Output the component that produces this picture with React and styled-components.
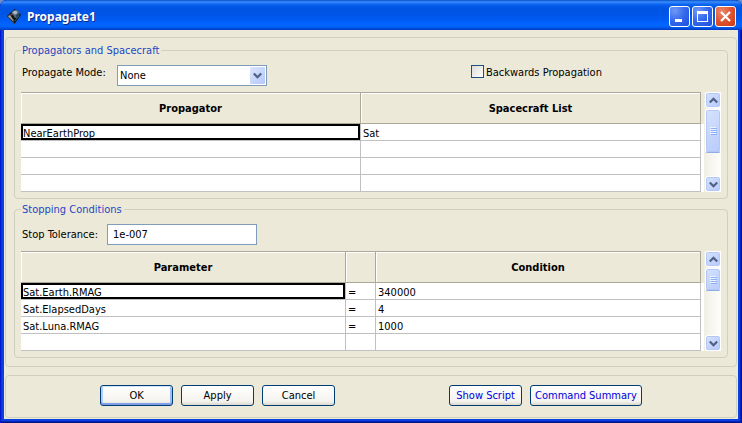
import React, { useState } from "react";
import styled, { createGlobalStyle, css } from "styled-components";

const GlobalStyle = createGlobalStyle`
  * { box-sizing: border-box; }
  body {
    margin: 0;
    background: #6f8fc4;
    color: #000;
    font: 11px/15px "DejaVu Sans Condensed", "DejaVu Sans", sans-serif;
  }
  button, input, select { font: inherit; color: inherit; }
`;

const Window = styled.main`
  display: flex;
  flex-direction: column;
  min-height: 100vh;
  padding: 0 4px 4px;
  border-radius: 7px 7px 0 0;
  background: #0a3fe0;
  box-shadow: inset 1px 0 #0019cf, inset -1px 0 #00138c, inset -2px 0 #0023b8,
    inset 0 -1px #00138c, inset 0 -2px #0023b8, inset 2px 0 #0a35d8;
`;

const TitleBar = styled.header`
  display: flex;
  align-items: center;
  gap: 5px;
  height: 30px;
  margin: 0 -4px;
  padding: 3px 6px 0 7px;
  border-radius: 7px 7px 0 0;
  background: linear-gradient(
    #0a4fc8 0, #3a90ff 2px, #2478f8 3px, #0560ec 5px, #0054e3 8px,
    #0055e6 14px, #005bf5 20px, #0366ff 25px, #0060f8 27px, #0046d0 29px, #003bc0 30px
  );
`;

const Title = styled.h1`
  flex: 1;
  margin: 0;
  color: #fff;
  font: bold 12px/18px "Noto Sans", "Open Sans", sans-serif;
  text-shadow: 1px 1px #0a2a8a;
`;

const CaptionButtons = styled.div`
  display: flex;
  gap: 2px;
`;

const CaptionButton = styled.button`
  display: grid;
  place-items: center;
  width: 21px;
  height: 21px;
  padding: 0;
  border: 1px solid #fff;
  border-radius: 3px;
  background: ${(p) =>
    p.$close
      ? "radial-gradient(circle at 30% 25%, #eb8a70, #e0532f 50%, #c83c14)"
      : "radial-gradient(circle at 25% 20%, #7098f6, #3468ec 50%, #1c50dc)"};
`;

const Client = styled.div`
  display: flex;
  flex: 1;
  flex-direction: column;
  gap: 8px;
  padding: 7px 1px 1px;
  background: #ece9d8;
`;

const frame = css`
  border: 1px solid #d0d0bf;
  border-radius: 4px;
`;

const Panel = styled.section`
  ${frame}
  display: flex;
  flex-direction: column;
  gap: 3px;
  padding: 5px 8px 8px;
`;

const Group = styled.fieldset`
  ${frame}
  min-width: 0;
  margin: 0;
  padding: 7px 6px 6px;
`;

const Legend = styled.legend`
  height: 15px;
  padding: 0 2px 0 1px;
  color: #1c46c4;
`;

const FieldRow = styled.div`
  display: grid;
  grid-template-columns: 9fr 5fr;
  align-items: start;
  margin-bottom: 6px;
`;

const Field = styled.div`
  display: flex;
  align-items: ${(p) => (p.$centered ? "center" : "flex-start")};
  padding-left: 1px;
`;

const FieldLabel = styled.label`
  width: ${(p) => (p.$wide ? 95 : 85)}px;
  white-space: nowrap;
`;

const ComboBox = styled.div`
  position: relative;
  width: 150px;
  height: 21px;
`;

const Select = styled.select`
  width: 100%;
  height: 100%;
  padding: 0 20px 0 2px;
  border: 1px solid #7f9db9;
  border-radius: 0;
  background: #fff;
  appearance: none;
`;

const ComboArrow = styled.span`
  position: absolute;
  top: 2px;
  right: 2px;
  display: grid;
  place-items: center;
  width: 15px;
  height: 17px;
  border-radius: 1px;
  background: linear-gradient(135deg, #dbe5fe, #b4c8f8);
  pointer-events: none;
`;

const TextInput = styled.input`
  width: 150px;
  height: 21px;
  padding: 0 5px;
  border: 1px solid #7f9db9;
  background: #fff;
`;

const CheckLabel = styled.label`
  display: flex;
  align-items: flex-start;
  gap: 2px;
`;

const CheckBox = styled.input`
  width: 13px;
  height: 13px;
  margin: 0;
  border: 1px solid #1c5180;
  background: linear-gradient(135deg, #dcdcd7, #fff);
  appearance: none;

  &:checked {
    background: #21a121;
    box-shadow: inset 0 0 0 2px #fff;
  }
`;

const GridArea = styled.div`
  display: flex;
  background: linear-gradient(#ece9d8 32px, #fff 32px);
`;

const Table = styled.table`
  flex: 1;
  width: 0;
  border-spacing: 0;
  table-layout: fixed;
  background: #fff;
`;

const Column = styled.col`
  width: ${(p) => p.$width || "auto"};
`;

const HeadCell = styled.th`
  height: 32px;
  padding: 0;
  border: solid #aca899;
  border-width: 1px 1px 1px 0;
  background: #ece9d8;
  box-shadow: inset 1px 1px #fff;
`;

const Cell = styled.td`
  height: 17px;
  padding: 3px 2px 0;
  border: solid #c0c0c0;
  border-width: 0 1px 1px 0;
  line-height: 13px;
  white-space: nowrap;
  ${(p) => p.$current && "box-shadow: inset 0 0 0 2px #000;"}
`;

const ScrollBar = styled.div`
  display: flex;
  flex-direction: column;
  gap: 1px;
  width: 17px;
  margin-left: 3px;
  padding-left: 1px;
  background: linear-gradient(90deg, #f0efe6, #fefefb);
`;

const scrollPart = css`
  display: grid;
  place-items: center;
  padding: 0;
  border: 1px solid #fff;
  border-radius: 3px;
  background: linear-gradient(135deg, #d6e2fe, #b7cafb);
  box-shadow: inset 0 0 0 1px #b4c8f6;
`;

const ScrollButton = styled.button`
  ${scrollPart}
  height: 16px;
`;

const ScrollThumb = styled.div`
  ${scrollPart}
  height: ${(p) => p.$size}px;
  margin-bottom: auto;
  border-bottom-color: #8fabe0;
`;

const Footer = styled.footer`
  ${frame}
  display: flex;
  flex-wrap: wrap;
  justify-content: center;
  column-gap: 114px;
  padding: 9px 8px 11px;
`;

const ButtonGroup = styled.div`
  display: flex;
  gap: 8px;
`;

const PushButton = styled.button`
  min-width: 73px;
  height: 21px;
  padding: 0 4px;
  border: 1px solid #003c74;
  border-radius: 3px;
  background: linear-gradient(#fff, #f4f3ee 80%, #dcd8cc);
  color: ${(p) => (p.$link ? "#0000e0" : "#000")};
  white-space: nowrap;
  ${(p) =>
    p.$primary &&
    "box-shadow: inset 0 1px #cee7ff, inset 0 -2px #7f9fe8, inset 2px 0 #b4cdf8, inset -2px 0 #a0bcf2;"}
`;

function AppIcon() {
  return (
    <svg width="15" height="15" viewBox="0 0 15 15" aria-hidden="true">
      <path d="M7.500 0 14 5.500 7.500 15 0 7z" fill="#0b1016" />
      <path d="M0 7 3 4.500 7 9 7.500 15z" fill="#343b36" />
      <path d="M1 7.500 3 6l3 4.500.5 2z" fill="#9aa18d" />
      <circle cx="8.500" cy="5" r="4" fill="#506878" />
      <path d="M5.500 3.500q2.500-3 5-.5l-1 2-2 .5z" fill="#a7b8c6" />
      <path d="M9 6.500 12 4q.5 3-2.500 4.500z" fill="#203c68" />
      <path d="m3 5 3 1 2 3-2 1z" fill="#101010" />
      <circle cx="4.500" cy="5.500" r="1" fill="#8c3548" />
      <path d="m8 12 3-4" stroke="#3d5e55" />
    </svg>
  );
}

function Chevron({ up }) {
  return (
    <svg width="9" height="7" viewBox="0 0 9 7" aria-hidden="true">
      <path d={up ? "M.8 5.500 4.500 1.800 8.200 5.500" : "M.8 1.500 4.500 5.200 8.200 1.500"} fill="none" stroke="#4d6185" strokeWidth="2.200" />
    </svg>
  );
}

function Grip() {
  return (
    <svg width="7" height="8" viewBox="0 0 7 8" shapeRendering="crispEdges" aria-hidden="true">
      <path d="M0 .5h6M0 2.500h6M0 4.500h6M0 6.500h6" stroke="#eef4fe" />
      <path d="M1 1.500h6M1 3.500h6M1 5.500h6M1 7.500h6" stroke="#8cb0f8" />
    </svg>
  );
}

function DataGrid({ label, columns, rows, thumb }) {
  return (
    <GridArea>
      <Table aria-label={label}>
        <colgroup>
          {columns.map((c, i) => <Column key={i} $width={c.width} />)}
        </colgroup>
        <thead>
          <tr>
            {columns.map((c, i) => <HeadCell key={i} scope="col">{c.title}</HeadCell>)}
          </tr>
        </thead>
        <tbody>
          {rows.map((row, r) => (
            <tr key={r}>
              {columns.map((c, i) => (
                <Cell key={i} $current={r === 0 && i === 0}>{row[i]}</Cell>
              ))}
            </tr>
          ))}
        </tbody>
      </Table>
      <ScrollBar>
        <ScrollButton type="button" aria-label="Scroll up"><Chevron up /></ScrollButton>
        <ScrollThumb $size={thumb}><Grip /></ScrollThumb>
        <ScrollButton type="button" aria-label="Scroll down"><Chevron /></ScrollButton>
      </ScrollBar>
    </GridArea>
  );
}

const propagatorColumns = [{ title: "Propagator" }, { title: "Spacecraft List" }];
const propagatorRows = [["NearEarthProp", "Sat"], [], [], []];

const conditionColumns = [
  { title: "Parameter" },
  { title: "", width: "30px" },
  { title: "Condition" },
];
const conditionRows = [
  ["Sat.Earth.RMAG", "=", "340000"],
  ["Sat.ElapsedDays", "=", "4"],
  ["Sat.Luna.RMAG", "=", "1000"],
  [],
];

export default function App() {
  const [tolerance, setTolerance] = useState("1e-007");

  return (
    <>
      <GlobalStyle />
      <Window>
        <TitleBar>
          <AppIcon />
          <Title>Propagate1</Title>
          <CaptionButtons>
            <CaptionButton type="button" aria-label="Minimize">
              <svg width="13" height="13"><path d="M2 9h7v3H2z" fill="#fff" /></svg>
            </CaptionButton>
            <CaptionButton type="button" aria-label="Maximize">
              <svg width="13" height="13" shapeRendering="crispEdges">
                <path d="M1 1h11v11H1zM2 4v7h9V4z" fill="#fff" fillRule="evenodd" />
              </svg>
            </CaptionButton>
            <CaptionButton type="button" aria-label="Close" $close>
              <svg width="13" height="13"><path d="m2 2 9 9m0-9-9 9" stroke="#fff" strokeWidth="2.200" /></svg>
            </CaptionButton>
          </CaptionButtons>
        </TitleBar>
        <Client>
          <Panel>
            <Group>
              <Legend>Propagators and Spacecraft</Legend>
              <FieldRow>
                <Field>
                  <FieldLabel htmlFor="mode" $wide>Propagate Mode:</FieldLabel>
                  <ComboBox>
                    <Select id="mode" defaultValue="None">
                      <option>None</option>
                      <option>Synchronized</option>
                    </Select>
                    <ComboArrow><Chevron /></ComboArrow>
                  </ComboBox>
                </Field>
                <CheckLabel>
                  <CheckBox type="checkbox" />
                  Backwards Propagation
                </CheckLabel>
              </FieldRow>
              <DataGrid label="Propagators" columns={propagatorColumns} rows={propagatorRows} thumb={44} />
            </Group>
            <Group>
              <Legend>Stopping Conditions</Legend>
              <FieldRow>
                <Field $centered>
                  <FieldLabel htmlFor="tolerance">Stop Tolerance:</FieldLabel>
                  <TextInput
                    id="tolerance"
                    type="text"
                    value={tolerance}
                    onChange={(e) => setTolerance(e.target.value)}
                  />
                </Field>
              </FieldRow>
              <DataGrid label="Stopping conditions" columns={conditionColumns} rows={conditionRows} thumb={23} />
            </Group>
          </Panel>
          <Footer>
            <ButtonGroup>
              <PushButton type="button" $primary>OK</PushButton>
              <PushButton type="button">Apply</PushButton>
              <PushButton type="button">Cancel</PushButton>
            </ButtonGroup>
            <ButtonGroup>
              <PushButton type="button" $link>Show Script</PushButton>
              <PushButton type="button" $link>Command Summary</PushButton>
            </ButtonGroup>
          </Footer>
        </Client>
      </Window>
    </>
  );
}
